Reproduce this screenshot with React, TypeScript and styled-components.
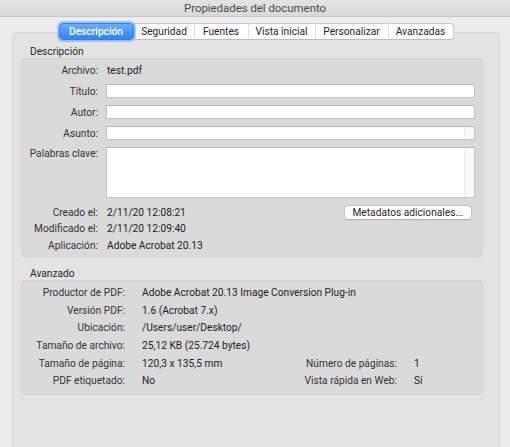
import React from 'react';
import styled, { createGlobalStyle } from 'styled-components';

const GlobalStyle = createGlobalStyle`
  html, body {
    margin: 0;
    padding: 0;
    background: #ececec;
  }
  body {
    font-family: 'Roboto', 'Liberation Sans', sans-serif;
    font-size: 10.2px;
    color: #262626;
  }
`;

const Window = styled.div`
  width: 510px;
  height: 447px;
  overflow: hidden;
  display: flex;
  flex-direction: column;
  background: #ececec;
`;

const TitleBar = styled.div`
  height: 16px;
  display: flex;
  align-items: center;
  justify-content: center;
  font-size: 11.4px;
  color: #4a4a4a;
  background: linear-gradient(#e3e3e3, #dadada);
  border-bottom: 1px solid #c6c6c6;
`;

const Content = styled.div`
  flex: 1;
  display: flex;
  padding: 15px 10px 0 12px;
`;

const Panel = styled.div`
  flex: 1;
  display: flex;
  flex-direction: column;
  background: #e3e3e3;
  border: 1px solid #d8d8d8;
  border-bottom: none;
  border-radius: 5px 5px 0 0;
`;

const TabRow = styled.div`
  display: flex;
  justify-content: center;
  margin-top: -10px;
  height: 17px;
`;

const Tab = styled.div<{ $w: number; $active?: boolean }>`
  width: ${(p) => p.$w}px;
  height: 17px;
  box-sizing: border-box;
  display: flex;
  align-items: center;
  justify-content: center;
  background: #fff;
  color: #262626;
  border-top: 1px solid #c9c9c9;
  border-bottom: 1px solid #bdbdbd;
  border-left: 1px solid #e0e0e0;

  &:last-child {
    border-right: 1px solid #c9c9c9;
    border-radius: 0 4px 4px 0;
  }

  ${(p) =>
    p.$active &&
    `
    position: relative;
    z-index: 1;
    color: #fff;
    font-weight: 500;
    border: 1px solid #2f7ff0;
    border-radius: 4px;
    background: linear-gradient(#69acfa, #2f84f4);
    box-shadow: 0 0 0 2px rgba(100, 160, 245, 0.55);
  `}
`;

const Body = styled.div`
  display: flex;
  flex-direction: column;
  padding: 0 16px 0 8px;
`;

const SectionLabel = styled.div<{ $top: number }>`
  margin-top: ${(p) => p.$top}px;
  padding-left: 9px;
  line-height: 13px;
  color: #262626;
`;

const Group = styled.div`
  background: #dadada;
  border: 1px solid #d2d2d2;
  border-radius: 4px;
`;

const DescGrid = styled.div`
  display: grid;
  grid-template-columns: 76px minmax(0, 1fr);
  column-gap: 8px;
  padding: 4px 7px 2px 0;
`;

const Label = styled.div<{ $h: number; $mb?: number; $top?: boolean }>`
  height: ${(p) => p.$h}px;
  margin-bottom: ${(p) => p.$mb || 0}px;
  display: flex;
  align-items: ${(p) => (p.$top ? 'flex-start' : 'center')};
  justify-content: flex-end;
  line-height: 13px;
  color: #333;
  white-space: nowrap;
`;

const Value = styled.div<{ $h: number; $mb?: number }>`
  height: ${(p) => p.$h}px;
  margin-bottom: ${(p) => p.$mb || 0}px;
  display: flex;
  align-items: center;
  padding-left: 1px;
  color: #222;
  white-space: nowrap;
`;

const Field = styled.div<{ $h: number; $mb?: number; $scroll?: boolean }>`
  position: relative;
  height: ${(p) => p.$h}px;
  margin-bottom: ${(p) => p.$mb || 0}px;
  box-sizing: border-box;
  background: #fff;
  border: 1px solid #c3c3c3;
  border-top-color: #b8b8b8;

  ${(p) =>
    p.$scroll &&
    `
    &::after {
      content: '';
      position: absolute;
      top: 0;
      bottom: 0;
      right: 0;
      width: 9px;
      background: #fafafa;
      border-left: 1px solid #ebebeb;
    }
  `}
`;

const ButtonRow = styled.div`
  height: 16px;
  display: flex;
  align-items: center;
  justify-content: space-between;
  padding-left: 1px;
  color: #222;
`;

const Button = styled.div`
  height: 15px;
  box-sizing: border-box;
  width: 128px;
  margin-right: 3px;
  display: flex;
  align-items: center;
  justify-content: center;
  background: #fff;
  border: 1px solid #c4c4c4;
  border-bottom-color: #b4b4b4;
  border-radius: 4px;
  color: #262626;
  box-shadow: 0 0.5px 0.5px rgba(0, 0, 0, 0.08);
`;

const AdvGrid = styled.div`
  display: grid;
  grid-template-columns: 103px minmax(0, 1fr) auto 69px;
  grid-auto-rows: 17.6px;
  column-gap: 16px;
  padding: 3px 0 4px 0;
`;

const Cell = styled.div<{ $right?: boolean; $span?: boolean }>`
  display: flex;
  align-items: center;
  justify-content: ${(p) => (p.$right ? 'flex-end' : 'flex-start')};
  white-space: nowrap;
  color: ${(p) => (p.$right ? '#333' : '#222')};
  padding-left: ${(p) => (p.$right ? 0 : 1)}px;
  ${(p) => p.$span && 'grid-column: 2 / -1;'}
`;

const tabs = [
  { name: 'Descripción', w: 75 },
  { name: 'Seguridad', w: 60 },
  { name: 'Fuentes', w: 54 },
  { name: 'Vista inicial', w: 67 },
  { name: 'Personalizar', w: 73 },
  { name: 'Avanzadas', w: 66 },
];

const advanced: [string, string][] = [
  ['Productor de PDF:', 'Adobe Acrobat 20.13 Image Conversion Plug-in'],
  ['Versión PDF:', '1.6 (Acrobat 7.x)'],
  ['Ubicación:', '/Users/user/Desktop/'],
  ['Tamaño de archivo:', '25,12 KB (25.724 bytes)'],
];

const App = () => (
  <>
    <GlobalStyle />
    <Window>
      <TitleBar>Propiedades del documento</TitleBar>
      <Content>
        <Panel>
          <TabRow>
            {tabs.map((t, i) => (
              <Tab key={t.name} $w={t.w} $active={i === 0}>
                {t.name}
              </Tab>
            ))}
          </TabRow>
          <Body>
            {/* Descripción */}
            <SectionLabel $top={5}>Descripción</SectionLabel>
            <Group>
              <DescGrid>
                <Label $h={14} $mb={7}>Archivo:</Label>
                <Value $h={14} $mb={7}>test.pdf</Value>

                <Label $h={14} $mb={7}>Título:</Label>
                <Field $h={14} $mb={7} />

                <Label $h={14} $mb={7}>Autor:</Label>
                <Field $h={14} $mb={7} />

                <Label $h={14} $mb={7}>Asunto:</Label>
                <Field $h={14} $mb={7} $scroll />

                <Label $h={51} $mb={6} $top>Palabras clave:</Label>
                <Field $h={51} $mb={6} $scroll />

                <Label $h={16}>Creado el:</Label>
                <ButtonRow>
                  <span>2/11/20 12:08:21</span>
                  <Button>Metadatos adicionales...</Button>
                </ButtonRow>

                <Label $h={17}>Modificado el:</Label>
                <Value $h={17}>2/11/20 12:09:40</Value>

                <Label $h={17}>Aplicación:</Label>
                <Value $h={17}>Adobe Acrobat 20.13</Value>
              </DescGrid>
            </Group>

            {/* Avanzado */}
            <SectionLabel $top={10}>Avanzado</SectionLabel>
            <Group>
              <AdvGrid>
                {advanced.map(([k, v]) => (
                  <React.Fragment key={k}>
                    <Cell $right>{k}</Cell>
                    <Cell $span>{v}</Cell>
                  </React.Fragment>
                ))}
                <Cell $right>Tamaño de página:</Cell>
                <Cell>120,3 x 135,5 mm</Cell>
                <Cell $right>Número de páginas:</Cell>
                <Cell>1</Cell>
                <Cell $right>PDF etiquetado:</Cell>
                <Cell>No</Cell>
                <Cell $right>Vista rápida en Web:</Cell>
                <Cell>Sí</Cell>
              </AdvGrid>
            </Group>
          </Body>
        </Panel>
      </Content>
    </Window>
  </>
);

export default App;
